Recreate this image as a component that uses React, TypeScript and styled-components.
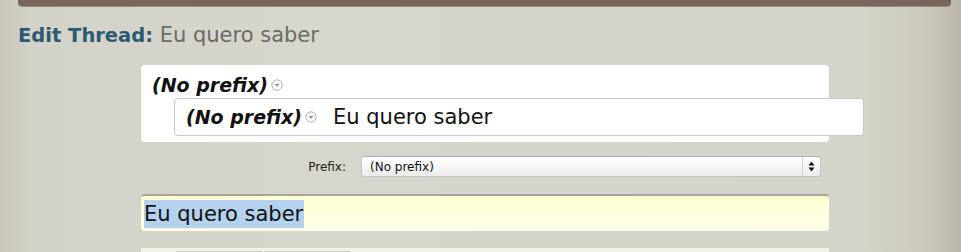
import * as React from "react";
import styled, { createGlobalStyle } from "styled-components";

const GlobalStyle = createGlobalStyle`
  html, body {
    margin: 0;
    padding: 0;
  }
  body {
    font-family: "DejaVu Sans", Verdana, sans-serif;
  }
`;

const Page = styled.div`
  min-height: 252px;
  overflow: hidden;
  background: linear-gradient(
    to right,
    #c8c6bb 0px,
    #d3d2c8 30px,
    #d7d6cc 300px,
    #d5d4ca 860px,
    #cdcbc0 920px,
    #bcb8a8 961px
  );
`;

const TopBar = styled.div`
  margin: 0 10px 0 18px;
  height: 6px;
  background: #7a655a;
  border-radius: 0 0 4px 4px;
  box-shadow: 0 1px 0 #9a8c82;
`;

const Title = styled.h1`
  margin: 16px 0 0 18px;
  font-size: 21px;
  line-height: 26px;
  font-weight: normal;
  color: #6b6b66;

  strong {
    color: #2b5a72;
    font-weight: bold;
    font-size: 19.5px;
  }
`;

const Form = styled.div`
  margin: 16px 0 0 141px;
  width: 688px;
  display: flex;
  flex-direction: column;
`;

const PreviewBox = styled.div`
  background: #fff;
  border-radius: 4px;
  padding: 6px 0 6px 11px;
  height: 77px;
  box-sizing: border-box;
`;

const PreviewLine = styled.div`
  height: 27px;
  display: flex;
  align-items: center;
`;

const PrefixTitle = styled.span`
  font-style: italic;
  font-weight: bold;
  font-size: 19px;
  color: #111;
  display: inline-flex;
  align-items: center;
  gap: 3px;
`;

const ArrowCircle = () => (
  <svg width="12" height="12" viewBox="0 0 12 12">
    <circle cx="6" cy="6" r="5.2" fill="#fafafa" stroke="#b5b5b5" />
    <path d="M3.5 5 L8.5 5 L6 7.8 Z" fill="#8f8f8f" />
  </svg>
);

const InnerBox = styled.div`
  margin: 0 0 0 22px;
  width: 690px;
  height: 38px;
  box-sizing: border-box;
  border: 1px solid #c8c8c8;
  border-radius: 4px;
  background: #fff;
  display: flex;
  align-items: center;
  gap: 16px;
  padding-left: 11px;
  font-size: 21px;
  color: #111;
`;

const PrefixRow = styled.div`
  margin-top: 14px;
  display: flex;
  align-items: center;
  height: 21px;
`;

const Label = styled.label`
  width: 220px;
  padding-right: 15px;
  text-align: right;
  box-sizing: border-box;
  font-size: 12px;
  color: #222;
`;

const Select = styled.div`
  width: 460px;
  height: 21px;
  box-sizing: border-box;
  border: 1px solid #c4c4c4;
  border-top-color: #b0b0b0;
  border-radius: 3px;
  background: linear-gradient(to bottom, #ffffff, #ebebeb);
  display: flex;
  align-items: center;
  padding-left: 8px;
  font-size: 12px;
  color: #111;
`;

const SelectArrows = styled.span`
  margin-left: auto;
  width: 17px;
  height: 100%;
  border-left: 1px solid #d0d0d0;
  display: flex;
  align-items: center;
  justify-content: center;
`;

const TitleInput = styled.div`
  margin-top: 17px;
  height: 37px;
  box-sizing: border-box;
  border-top: 2px solid #a6a59c;
  border-radius: 4px;
  background: linear-gradient(to bottom, #fffdd2, #ffffe8);
  display: flex;
  align-items: center;
  padding-left: 3px;
  font-size: 21px;
  color: #111;
`;

const Selected = styled.span`
  background: #b4d2ee;
  line-height: 28px;
  padding-right: 1px;
`;

const FooterStrip = styled.div`
  margin-top: 17px;
  height: 8px;
  background: #f1f1ec;
  display: flex;
  gap: 2px;
  padding-left: 35px;
`;

const Tab = styled.span`
  width: 86px;
  border-top: 1px solid #c9c9c2;
  margin-top: 3px;
`;

export default function App() {
  return (
    <>
      <GlobalStyle />
      <Page>
        <TopBar />
        <Title>
          <strong>Edit Thread:</strong> Eu quero saber
        </Title>
        <Form>
          <PreviewBox>
            <PreviewLine>
              <PrefixTitle>
                (No prefix)
                <ArrowCircle />
              </PrefixTitle>
            </PreviewLine>
            <InnerBox>
              <PrefixTitle>
                (No prefix)
                <ArrowCircle />
              </PrefixTitle>
              <span>Eu quero saber</span>
            </InnerBox>
          </PreviewBox>
          <PrefixRow>
            <Label>Prefix:</Label>
            <Select>
              (No prefix)
              <SelectArrows>
                <svg width="7" height="11" viewBox="0 0 7 11">
                  <path d="M3.5 0.5 L6.5 4.5 L0.5 4.5 Z" fill="#111" />
                  <path d="M0.5 6.5 L6.5 6.5 L3.5 10.5 Z" fill="#111" />
                </svg>
              </SelectArrows>
            </Select>
          </PrefixRow>
          <TitleInput>
            <Selected>Eu quero saber</Selected>
          </TitleInput>
          <FooterStrip>
            <Tab />
            <Tab />
          </FooterStrip>
        </Form>
      </Page>
    </>
  );
}
